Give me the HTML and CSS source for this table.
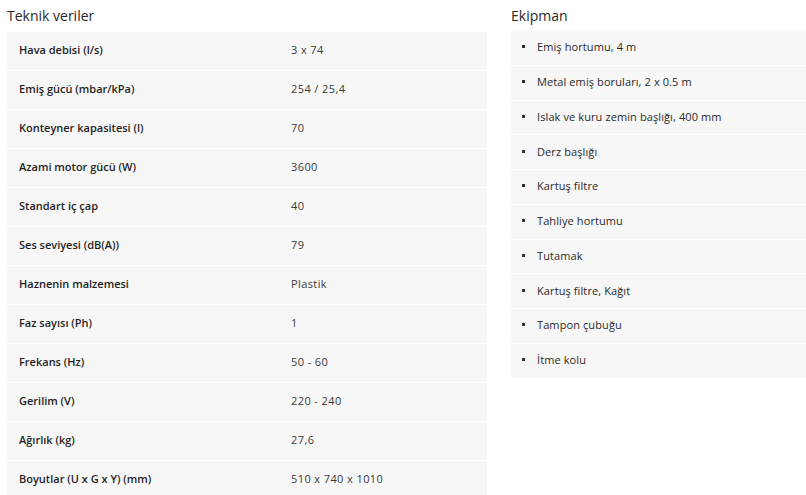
FILE: index.html
```html
<!DOCTYPE html>
<html lang="tr">
<head>
<meta charset="utf-8">
<link rel="stylesheet" href="styles.css">
</head>
<body>
<div class="page">
  <section class="specs">
    <h2 class="title">Teknik veriler</h2>
    <div class="table">
      <div class="row"><span class="label">Hava debisi (l/s)</span><span class="value">3 x 74</span></div>
      <div class="row"><span class="label">Emiş gücü (mbar/kPa)</span><span class="value">254 / 25,4</span></div>
      <div class="row"><span class="label">Konteyner kapasitesi (l)</span><span class="value">70</span></div>
      <div class="row"><span class="label">Azami motor gücü (W)</span><span class="value">3600</span></div>
      <div class="row"><span class="label">Standart iç çap</span><span class="value">40</span></div>
      <div class="row"><span class="label">Ses seviyesi (dB(A))</span><span class="value">79</span></div>
      <div class="row"><span class="label">Haznenin malzemesi</span><span class="value">Plastik</span></div>
      <div class="row"><span class="label">Faz sayısı (Ph)</span><span class="value">1</span></div>
      <div class="row"><span class="label">Frekans (Hz)</span><span class="value">50 - 60</span></div>
      <div class="row"><span class="label">Gerilim (V)</span><span class="value">220 - 240</span></div>
      <div class="row"><span class="label">Ağırlık (kg)</span><span class="value">27,6</span></div>
      <div class="row"><span class="label">Boyutlar (U x G x Y) (mm)</span><span class="value">510 x 740 x 1010</span></div>
    </div>
  </section>
  <section class="equip">
    <h2 class="title">Ekipman</h2>
    <ul class="list">
      <li class="item">Emiş hortumu, 4 m</li>
      <li class="item">Metal emiş boruları, 2 x 0.5 m</li>
      <li class="item">Islak ve kuru zemin başlığı, 400 mm</li>
      <li class="item">Derz başlığı</li>
      <li class="item">Kartuş filtre</li>
      <li class="item">Tahliye hortumu</li>
      <li class="item">Tutamak</li>
      <li class="item">Kartuş filtre, Kağıt</li>
      <li class="item">Tampon çubuğu</li>
      <li class="item">İtme kolu</li>
    </ul>
  </section>
</div>
</body>
</html>
```
FILE: styles.css
```css
* { box-sizing: border-box; }
html, body { margin: 0; padding: 0; background: #fff; }
body {
  font-family: "Open Sans", "Noto Sans", sans-serif;
  color: #333;
  overflow: hidden;
}
.page {
  display: flex;
  align-items: flex-start;
  gap: 24px;
  padding-left: 7px;
}
.title {
  margin: 0;
  height: 31px;
  padding-top: 6px;
  font-size: 14px;
  line-height: 20px;
  font-weight: 400;
  color: #2a2a2a;
}
.specs { width: 480px; flex: none; }
.specs .title { height: 32px; }
.table { display: flex; flex-direction: column; gap: 1px; }
.row {
  display: flex;
  align-items: center;
  height: 38px;
  padding-bottom: 3px;
  background: #f7f7f7;
  font-size: 11px;
}
.label {
  width: 284px;
  padding-left: 12px;
  font-weight: 600;
  color: #1f1f1f;
}
.value { color: #3a3a3a; letter-spacing: 0.4px; }
.equip { flex: 1; }
.list {
  margin: 0;
  padding: 0;
  list-style: none;
  display: flex;
  flex-direction: column;
  gap: 1px;
}
.item {
  display: flex;
  align-items: center;
  height: 33.75px;
  padding-bottom: 2px;
  background: #f7f7f7;
  font-size: 11px;
  letter-spacing: 0.1px;
  padding-left: 11px;
  color: #2a2a2a;
}
.item::before {
  content: "";
  width: 3px;
  height: 3px;
  background: #333;
  margin-right: 12px;
  flex: none;
}
```
